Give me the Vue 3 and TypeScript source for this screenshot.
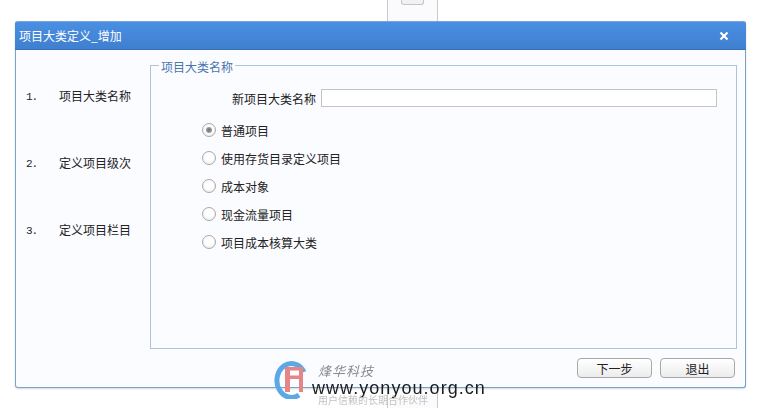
<script setup lang="ts">
import { ref } from 'vue'

const steps = [
  { no: '1.', label: '项目大类名称' },
  { no: '2.', label: '定义项目级次' },
  { no: '3.', label: '定义项目栏目' },
]

const options = ['普通项目', '使用存货目录定义项目', '成本对象', '现金流量项目', '项目成本核算大类']
const picked = ref(0)
const name = ref('')
</script>

<template>
  <div class="page">
    <div class="stub stub-top"><span class="stub-btn" /></div>
    <div class="stub stub-bottom" />

    <section class="dialog">
      <header class="dialog-head">
        <span class="dialog-title">项目大类定义_增加</span>
        <svg class="dialog-close" viewBox="0 0 10 10" width="10" height="10">
          <path d="M1.5 1.5l7 7M8.5 1.5l-7 7" stroke="#fff" stroke-width="2.2" fill="none" />
        </svg>
      </header>

      <div class="dialog-body">
        <ol class="steps">
          <li v-for="s in steps" :key="s.no" class="step">
            <span class="step-no">{{ s.no }}</span>
            <span>{{ s.label }}</span>
          </li>
        </ol>

        <div class="main">
          <fieldset class="group">
            <legend class="group-title">项目大类名称</legend>
            <label class="name-row">
              <span>新项目大类名称</span>
              <input v-model="name" class="name-input" type="text" />
            </label>
            <div class="radios">
              <div v-for="(opt, i) in options" :key="opt" class="radio-row" @click="picked = i">
                <span class="radio" :class="{ 'radio--on': picked === i }" />
                <span>{{ opt }}</span>
              </div>
            </div>
          </fieldset>

          <footer class="actions">
            <button class="btn">下一步</button>
            <button class="btn">退出</button>
          </footer>
        </div>
      </div>
    </section>

    <div class="mark">
      <svg class="mark-logo" viewBox="0 0 48 40" width="48" height="40">
        <path d="M30 13A14.5 17 0 1 0 25 36" fill="none" stroke="#5aa9e6" stroke-width="5" />
        <path fill-rule="evenodd" d="M11 8h18v25h-4V20H16v13h-5zM16 11.500v5h9v-5z" fill="#e58585" />
      </svg>
      <div class="mark-brand">烽华科技</div>
      <div class="mark-url">www.yonyou.org.cn</div>
      <div class="mark-slogan">用户信赖的长期合作伙伴</div>
    </div>
  </div>
</template>

<style>
html,
body {
  margin: 0;
  background: #fff;
  overflow: hidden;
}
</style>

<style scoped>
.page {
  position: relative;
  width: 766px;
  height: 408px;
  padding: 21px 20px 0 15px;
  box-sizing: border-box;
  overflow: hidden;
  font: 12px 'Noto Sans CJK SC', 'Liberation Sans', sans-serif;
  color: #222;
}

.stub {
  position: absolute;
  left: 387px;
  width: 51px;
  box-sizing: border-box;
  border: solid #c9c9cc;
  border-width: 0 1px;
  background: #fbfbfd;
}

.stub-top {
  top: 0;
  height: 21px;
}

.stub-btn {
  display: block;
  width: 23px;
  height: 5px;
  margin-left: 13px;
  box-sizing: border-box;
  border: 1px solid #c6c6c6;
  border-top: 0;
  border-radius: 0 0 3px 3px;
  background: #f1f1f1;
}

.stub-bottom {
  top: 388px;
  height: 20px;
}

.dialog {
  position: relative;
  width: 731px;
  height: 367px;
  box-sizing: border-box;
  display: flex;
  flex-direction: column;
  border: 1px solid #7ba2c9;
  border-top: 0;
  border-radius: 3px;
  background: #fbfcff;
  box-shadow: 0 1px 2px rgba(120, 140, 170, 0.35);
}

.dialog-head {
  height: 29px;
  flex-shrink: 0;
  margin: 0 -1px;
  padding: 0 17px 0 4px;
  display: flex;
  align-items: center;
  justify-content: space-between;
  border-radius: 3px 3px 0 0;
  border-top: 1px solid #79a5d8;
  border-bottom: 1px solid #3a72b6;
  box-sizing: border-box;
  background: linear-gradient(#4a8fe3, #3f7fcf);
  color: #fff;
}

.dialog-title {
  font-size: 12px;
}

.dialog-body {
  flex: 1;
  display: flex;
  min-height: 0;
}

.steps {
  width: 134px;
  flex-shrink: 0;
  list-style: none;
  margin: 0;
  padding: 36px 0 0 10px;
  box-sizing: border-box;
}

.step {
  display: flex;
  height: 18px;
  align-items: center;
  margin-bottom: 49px;
}

.step-no {
  width: 33px;
  padding-top: 4px;
  letter-spacing: -1px;
  font: 11px 'Liberation Mono', monospace;
}

.main {
  width: 587px;
  display: flex;
  flex-direction: column;
}

.group {
  height: 293px;
  margin: 6px 0 0;
  padding: 0;
  box-sizing: border-box;
  border: 1px solid #b3c3d6;
  min-width: 0;
}

.group-title {
  margin-left: 8px;
  padding: 4px 2px 0;
  line-height: 14px;
  color: #4a74ae;
}

.name-row {
  display: flex;
  align-items: center;
  justify-content: flex-end;
  gap: 5px;
  margin: 15px 19px 0 0;
}

.name-input {
  width: 396px;
  height: 18px;
  padding: 0;
  box-sizing: border-box;
  border: 1px solid #c4c4c4;
  background: #fff;
  outline: none;
}

.radios {
  display: flex;
  flex-direction: column;
  margin: 9px 0 0 51px;
}

.radio-row {
  display: flex;
  align-items: center;
  gap: 5px;
  height: 28px;
}

.radio {
  width: 14px;
  height: 14px;
  flex-shrink: 0;
  box-sizing: border-box;
  border: 1px solid #a9a9a9;
  border-radius: 50%;
  background: radial-gradient(circle at 50% 40%, #fff 40%, #e6e6e6);
  position: relative;
}

.radio--on::after {
  content: '';
  position: absolute;
  left: 3px;
  top: 3px;
  width: 6px;
  height: 6px;
  border-radius: 50%;
  background: radial-gradient(#6f6f6f, #b5b5b5);
}

.actions {
  display: flex;
  justify-content: flex-end;
  gap: 8px;
  margin-top: 9px;
  padding-right: 2px;
}

.btn {
  width: 75px;
  height: 20px;
  padding: 0;
  border: 1px solid #a8a8a8;
  border-radius: 4px;
  background: linear-gradient(#fff, #ececec);
  font: inherit;
  color: #222;
}

.mark {
  position: absolute;
  left: 274px;
  top: 359px;
  width: 220px;
  height: 49px;
}

.mark-logo {
  position: absolute;
  left: 0;
  top: 0;
}

.mark-brand {
  position: absolute;
  left: 44px;
  top: 5px;
  font: italic 13px/14px 'Noto Sans CJK SC', sans-serif;
  letter-spacing: 1px;
  color: #8a8a8a;
  filter: blur(0.4px);
}

.mark-url {
  position: absolute;
  left: 38px;
  top: 23px;
  font: 18px/12px 'Liberation Sans', sans-serif;
  letter-spacing: 1.05px;
  color: #1c1c1c;
  white-space: nowrap;
  filter: blur(0.25px);
}

.mark-slogan {
  position: absolute;
  left: 44px;
  top: 36px;
  font: 10px/10px 'Noto Sans CJK SC', sans-serif;
  color: #c2c2c2;
  filter: blur(0.7px);
}
</style>
